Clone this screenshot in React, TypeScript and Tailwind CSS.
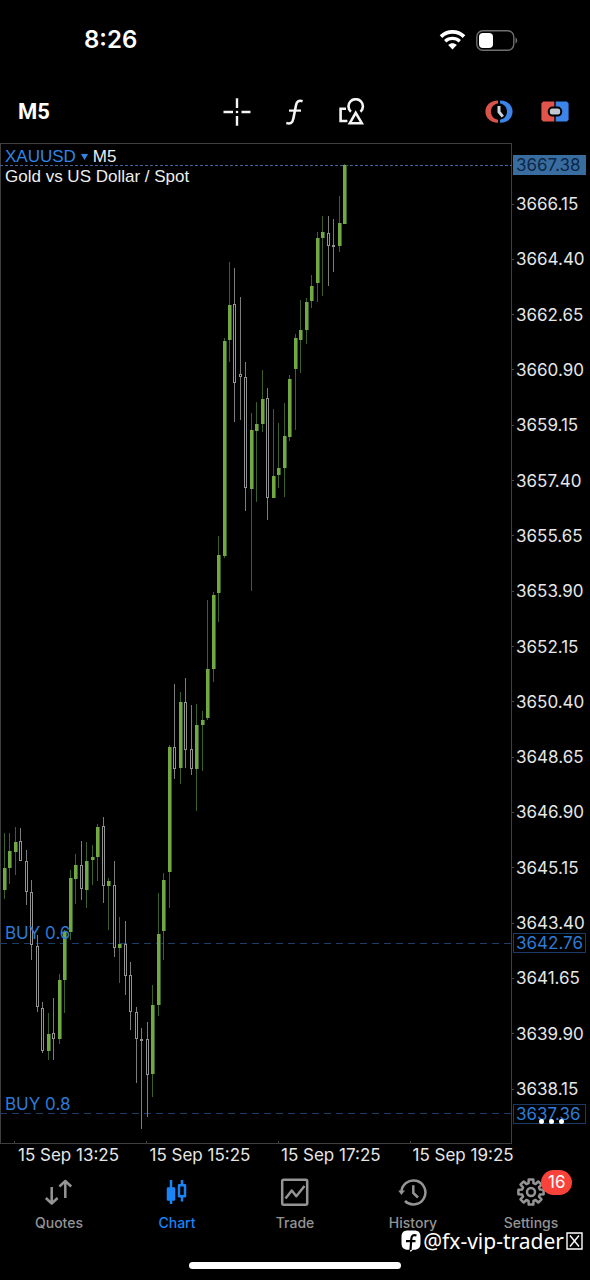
import {useState} from 'react';
import type {ReactNode} from 'react';

// Geometry of the plot, in chart units
const PLOT_TOP = 143;
const PLOT_WIDTH = 512;
const PLOT_HEIGHT = 1001;
const CANDLE_STEP = 5.49;

const TOP_PRICE = 3668.09;
const UNITS_PER_PRICE = 31.59;

// [rising, high, body top, body bottom, low]
type Candle = [number, number, number, number, number];

const candles: Candle[] = [
	[1, 833, 868, 890, 899],
	[1, 833, 851, 868, 884],
	[1, 827, 842, 852, 875],
	[0, 828, 841, 861, 861],
	[0, 850, 861, 892, 905],
	[0, 880, 892, 945, 960],
	[0, 935, 946, 1007, 1012],
	[0, 1002, 1008, 1051, 1053],
	[1, 1013, 1034, 1051, 1060],
	[0, 998, 1033, 1039, 1060],
	[1, 974, 980, 1039, 1044],
	[1, 930, 932, 980, 1013],
	[1, 870, 878, 932, 940],
	[1, 854, 865, 879, 904],
	[0, 841, 865, 889, 900],
	[1, 842, 861, 890, 908],
	[1, 845, 857, 860, 885],
	[1, 824, 827, 857, 881],
	[0, 817, 826, 886, 903],
	[1, 878, 881, 886, 930],
	[0, 861, 885, 948, 957],
	[1, 917, 944, 948, 983],
	[0, 921, 944, 976, 995],
	[0, 962, 975, 1012, 1030],
	[0, 1007, 1012, 1039, 1083],
	[0, 1028, 1039, 1041, 1129],
	[0, 1022, 1039, 1075, 1117],
	[1, 985, 1005, 1074, 1097],
	[1, 893, 934, 1005, 1016],
	[1, 873, 880, 931, 960],
	[1, 745, 747, 872, 908],
	[0, 684, 747, 769, 779],
	[1, 692, 702, 768, 784],
	[0, 678, 702, 750, 768],
	[0, 705, 749, 769, 775],
	[1, 704, 725, 769, 811],
	[1, 711, 720, 725, 771],
	[1, 600, 669, 718, 720],
	[1, 592, 595, 669, 682],
	[1, 536, 555, 593, 622],
	[1, 338, 341, 556, 558],
	[1, 262, 305, 340, 362],
	[0, 268, 304, 383, 422],
	[0, 297, 374, 377, 420],
	[0, 362, 377, 488, 511],
	[1, 413, 430, 489, 591],
	[1, 402, 424, 431, 502],
	[1, 370, 399, 424, 432],
	[0, 388, 398, 498, 520],
	[1, 409, 476, 498, 498],
	[1, 423, 468, 475, 488],
	[1, 403, 436, 468, 497],
	[1, 375, 379, 437, 441],
	[1, 334, 338, 369, 430],
	[1, 300, 330, 340, 373],
	[1, 298, 302, 330, 344],
	[1, 275, 286, 301, 308],
	[1, 232, 238, 283, 302],
	[1, 216, 232, 238, 296],
	[0, 216, 233, 246, 286],
	[0, 219, 245, 247, 272],
	[1, 196, 223, 246, 252],
	[1, 164, 165, 224, 224],
];

const priceLabels = Array.from({length: 17}, (_, i) =>
	(3666.15 - i * 1.75).toFixed(2),
);

const timeLabels = [
	'15 Sep 13:25',
	'15 Sep 15:25',
	'15 Sep 17:25',
	'15 Sep 19:25',
];

const positions = [
	{label: 'BUY 0.6', price: 3642.76},
	{label: 'BUY 0.8', price: 3637.36},
];

const currentPrice = 3667.38;

const priceOffset = (price: number) => (TOP_PRICE - price) * UNITS_PER_PRICE;
const priceY = (price: number) => Math.floor(PLOT_TOP + priceOffset(price)) + 0.5;
const priceTop = (price: number) =>
	`${(priceOffset(price) / PLOT_HEIGHT) * 100}%`;

// Outline of the settings gear: eight teeth around (15, 15)
const gearPoints = Array.from({length: 8}, (_, i) =>
	[
		[-0.27, 9.2],
		[-0.18, 12.8],
		[0.18, 12.8],
		[0.27, 9.2],
	]
		.map(([offset, radius]) => {
			const angle = (i * Math.PI) / 4 + offset;
			const x = 15 + radius * Math.sin(angle);
			const y = 15 - radius * Math.cos(angle);
			return `${x.toFixed(2)},${y.toFixed(2)}`;
		})
		.join(' '),
).join(' ');

function StatusBar() {
	return (
		<div className="flex h-20 items-center justify-between pl-21 pr-[72px]">
			<span className="text-2xl font-semibold leading-7">8:26</span>
			<div className="flex items-center gap-2.5">
				<svg width="27" height="22" viewBox="0 0 27 22" fill="none">
					<path
						d="M2 7.6C8.5 1.4 18.5 1.4 25 7.6"
						stroke="white"
						strokeWidth="3.8"
					/>
					<path
						d="M6.2 12.2C10.4 8.4 16.6 8.4 20.8 12.2"
						stroke="white"
						strokeWidth="3.4"
					/>
					<path d="M9.2 16C11.8 13.8 15.2 13.8 17.8 16L13.5 20.4Z" fill="white" />
				</svg>
				<svg width="42" height="21" viewBox="0 0 42 21" fill="none">
					<rect
						x="0.8"
						y="0.8"
						width="37"
						height="19.4"
						rx="6"
						stroke="#6f6f6f"
						strokeWidth="1.4"
					/>
					<rect x="3" y="3" width="14" height="15" rx="4" fill="white" />
					<path d="M39.5 7.5C41.8 8.5 41.8 12.5 39.5 13.5Z" fill="#6f6f6f" />
				</svg>
			</div>
		</div>
	);
}

function Toolbar() {
	return (
		<div className="grid h-[63px] grid-cols-[1fr_auto_1fr] items-center pl-[18px] pr-[21px]">
			<button className="justify-self-start font-['Roboto',sans-serif] text-[22px] font-bold leading-7">
				M5
			</button>
			<div className="flex gap-[29px]">
				<button aria-label="Crosshair">
					<svg
						width="28"
						height="28"
						viewBox="0 0 28 28"
						fill="none"
						stroke="#f4f4f4"
						strokeWidth="2.4"
					>
						<path d="M14 0.3V10M14 18V27.7M0.5 14H10M18.5 14H27.5" />
						<circle cx="14" cy="14" r="1.3" fill="#f4f4f4" stroke="none" />
					</svg>
				</button>
				<button aria-label="Indicators">
					<svg
						width="28"
						height="28"
						viewBox="0 0 28 28"
						fill="none"
						stroke="#f4f4f4"
						strokeWidth="2.6"
					>
						<path d="M22.6 3.3C18.8 1.9 16.7 3.6 16 7.2L13.4 20.4C12.6 25 10.4 26.2 6.3 25.1" />
						<path d="M9 12.6H21" strokeWidth="2.2" />
					</svg>
				</button>
				<button aria-label="Objects">
					<svg
						width="28"
						height="28"
						viewBox="0 0 28 28"
						fill="none"
						stroke="#f4f4f4"
						strokeWidth="2.6"
					>
						<path d="M9 10.8H3.6V23H10.4" />
						<path d="M13.9 13.7A7.2 7.2 0 1 1 23.5 13.7" />
						<path d="M18.7 14.8L12.8 25.2H24.8Z" />
					</svg>
				</button>
			</div>
			<div className="flex gap-7 justify-self-end">
				<button aria-label="Pending order">
					<svg width="28" height="28" viewBox="0 0 28 28" fill="none">
						<path
							d="M13 2.4C5 2.4 0.4 7.6 0.4 13.6C0.4 19.6 5 24.8 13 24.8V21.8C8.6 21.2 6 18 6 13.6C6 9.2 8.6 6 13 5.4Z"
							fill="#d9534b"
						/>
						<path
							d="M15 2.4C23 2.4 27.6 7.6 27.6 13.6C27.6 19.6 23 24.8 15 24.8V21.8C19.4 21.2 22 18 22 13.6C22 9.2 19.4 6 15 5.4Z"
							fill="#3c84e8"
						/>
						<path d="M14 8V14L17.8 18.6" stroke="#cfd5da" strokeWidth="3" />
					</svg>
				</button>
				<button aria-label="One click trading">
					<svg width="28" height="28" viewBox="0 0 28 28" fill="none">
						<path d="M13.3 3.6H2.2L0.4 5.4V21.8L2.2 23.6H13.3Z" fill="#e0544c" />
						<path d="M14.7 3.6H25.8L27.6 5.4V21.8L25.8 23.6H14.7Z" fill="#3c84e8" />
						<rect
							x="7.8"
							y="9.6"
							width="12.4"
							height="8"
							rx="3.5"
							fill="#c3c9d2"
							stroke="black"
							strokeWidth="2"
						/>
					</svg>
				</button>
			</div>
		</div>
	);
}

function CandleShape({candle, index}: {candle: Candle; index: number}) {
	const [rising, high, top, bottom, low] = candle;
	const x = Math.round(3.9 + index * CANDLE_STEP);

	if (rising) {
		return (
			<g>
				<rect x={x} y={high} width="1" height={low - high} fill="#3d5f28" />
				<rect x={x - 1} y={top} width="3" height={bottom - top} fill="#72a843" />
				<rect
					x={x + 2}
					y={top}
					width="1"
					height={bottom - top}
					fill="#3d5f28"
				/>
			</g>
		);
	}

	return (
		<g>
			<rect x={x} y={high} width="1" height={low - high} fill="#7c7c7c" />
			<rect
				x={x - 0.5}
				y={top + 0.5}
				width="2"
				height={Math.max(bottom - top - 1, 1)}
				fill="black"
				stroke="#929292"
			/>
		</g>
	);
}

function Plot() {
	return (
		<div className="relative min-w-0 flex-1">
			<svg
				className="block h-auto w-full"
				viewBox={`0 ${PLOT_TOP} ${PLOT_WIDTH} ${PLOT_HEIGHT}`}
				fill="none"
			>
				<rect x="0.5" y="143.5" width="511" height="1000" stroke="#3f3f3f" />
				<path
					d="M14.5 1141V1144M146.5 1141V1144M278.5 1141V1144M410.5 1141V1144"
					stroke="#3f3f3f"
				/>
				{positions.map(({label, price}) => (
					<path
						key={label}
						d={`M0 ${priceY(price)}H512`}
						stroke="#1d3d66"
						strokeDasharray="7 5"
					/>
				))}
				<path
					d={`M0 ${priceY(currentPrice)}H512`}
					stroke="#44659a"
					strokeDasharray="3 2"
				/>
				{candles.map((candle, index) => (
					<CandleShape key={index} candle={candle} index={index} />
				))}
			</svg>

			<div className="absolute left-[5px] top-1 font-['Liberation_Sans',sans-serif] text-[17px] leading-5">
				<button className="flex items-center text-[#eeeeee]">
					<span className="text-[#2f86e6]">XAUUSD</span>
					<svg className="mx-[5px]" width="7" height="6" viewBox="0 0 7 6">
						<path d="M0 0H7L3.5 6Z" fill="#2f86e6" />
					</svg>
					M5
				</button>
				<p className="text-[#eeeeee]">Gold vs US Dollar / Spot</p>
			</div>

			{positions.map(({label, price}) => (
				<span
					key={label}
					className="absolute left-[5px] -translate-y-full text-[17px] leading-5 text-[#2d7bd6]"
					style={{top: priceTop(price)}}
				>
					{label}
				</span>
			))}
		</div>
	);
}

function PriceAxis() {
	return (
		<div className="relative flex w-[78px] shrink-0 flex-col justify-between pb-[45px] pt-[51px] text-[17px] leading-5 text-[#e6e6e6]">
			{priceLabels.map(price => (
				<div key={price} className="flex items-center gap-0.5">
					<span className="h-px w-0.5 bg-[#4a4a4a]" />
					{price}
				</div>
			))}

			<span
				className="absolute left-px right-1 -translate-y-1/2 bg-[#3a6d9f] pl-[3px] text-[#0b2746]"
				style={{top: priceTop(currentPrice)}}
			>
				{currentPrice}
			</span>
			{positions.map(({price}) => (
				<span
					key={price}
					className="absolute left-px right-1 -translate-y-1/2 border border-[#173b66] bg-black pl-0.5 leading-[18px] text-[#2d7bd6]"
					style={{top: priceTop(price)}}
				>
					{price}
				</span>
			))}

			<button
				aria-label="More"
				className="absolute bottom-5 left-[27px] flex gap-[5px]"
			>
				<span className="size-[5px] rounded-full bg-white" />
				<span className="size-[5px] rounded-full bg-white" />
				<span className="size-[5px] rounded-full bg-white" />
			</button>
		</div>
	);
}

const tabs: {name: string; icon: ReactNode; badge?: number}[] = [
	{
		name: 'Quotes',
		icon: (
			<>
				<path d="M7.7 10V26.5M1.8 21L7.7 26.5L13.6 21" />
				<path d="M21.3 21V4M15.4 9.5L21.3 4L27.2 9.5" />
			</>
		),
	},
	{
		name: 'Chart',
		icon: (
			<>
				<path d="M9 3V27M20 3V8M20 20V24.5" />
				<rect x="6" y="11.5" width="6" height="11" fill="currentColor" />
				<rect x="17" y="8.3" width="6" height="11" />
			</>
		),
	},
	{
		name: 'Trade',
		icon: (
			<>
				<rect x="2.2" y="2.8" width="25" height="25" rx="1.5" />
				<path d="M5.5 21.5L11.8 13.5L16.3 19.3L24.5 9" />
			</>
		),
	},
	{
		name: 'History',
		icon: (
			<>
				<path d="M3.4 15.5A12 12 0 1 1 7 24" />
				<path d="M0.2 13.6H7L3.4 18Z" fill="currentColor" stroke="none" />
				<path d="M15.3 8.3V16L20 20.5" />
			</>
		),
	},
	{
		name: 'Settings',
		badge: 16,
		icon: (
			<>
				<polygon points={gearPoints} />
				<circle cx="15" cy="15" r="4" />
			</>
		),
	},
];

function TabBar() {
	const [active, setActive] = useState('Chart');

	return (
		<nav className="grid grid-cols-5 pt-[11px]">
			{tabs.map(({name, icon, badge}) => (
				<button
					key={name}
					onClick={() => setActive(name)}
					className={`flex flex-col items-center gap-[6px] ${
						name === active ? 'text-[#1a84f5]' : 'text-[#949494]'
					}`}
				>
					<span className="relative">
						<svg
							width="30"
							height="30"
							viewBox="0 0 30 30"
							fill="none"
							stroke="currentColor"
							strokeWidth="2.5"
							strokeLinejoin="round"
						>
							{icon}
						</svg>
						{badge && (
							<span className="absolute -top-[7px] left-[25px] rounded-full bg-[#f9423a] px-[7px] text-[17px] leading-[25px] text-white">
								{badge}
							</span>
						)}
					</span>
					<span className="text-sm font-medium leading-5">{name}</span>
				</button>
			))}
		</nav>
	);
}

function Watermark() {
	return (
		<div className="absolute bottom-[27px] right-[7px] flex items-center gap-0.5 font-['Noto_Sans',sans-serif] text-[21px] leading-6 text-white">
			<svg width="20" height="22" viewBox="0 0 20 22" fill="none">
				<path
					d="M7 0.5H13C17.5 0.5 19.5 2.5 19.5 7V13C19.5 17.5 17.5 19.8 13 19.8H12L9.5 22L9 19.8H7C2.5 19.8 0.5 17.5 0.5 13V7C0.5 2.5 2.5 0.5 7 0.5Z"
					fill="white"
				/>
				<path
					d="M15.5 5.5C12 4.4 10.6 5.8 10.3 9L9.5 20M5 11.2H14.5"
					stroke="black"
					strokeWidth="2.2"
				/>
			</svg>
			<span>@fx-vip-trader</span>
			<svg
				width="17"
				height="18"
				viewBox="0 0 17 18"
				fill="none"
				stroke="white"
				strokeWidth="1.4"
			>
				<path d="M1 1H16V17H1ZM4 3.5L13 14.5M13 3.5L4 14.5" />
			</svg>
		</div>
	);
}

export default function App() {
	return (
		<div className="relative min-h-screen overflow-hidden bg-black font-['Inter',sans-serif] text-white">
			<StatusBar />
			<Toolbar />

			<main>
				<div className="flex">
					<Plot />
					<PriceAxis />
				</div>
				{/* Time axis */}
				<div className="grid grid-cols-4 pl-[18px] pr-[46px] text-[17px] leading-[22px] text-[#e6e6e6]">
					{timeLabels.map(time => (
						<span key={time} className="whitespace-nowrap">
							{time}
						</span>
					))}
				</div>
			</main>

			<TabBar />
			<div className="mx-auto mb-[11px] mt-[29px] h-[7px] w-[36%] rounded-full bg-white" />
			<Watermark />
		</div>
	);
}
